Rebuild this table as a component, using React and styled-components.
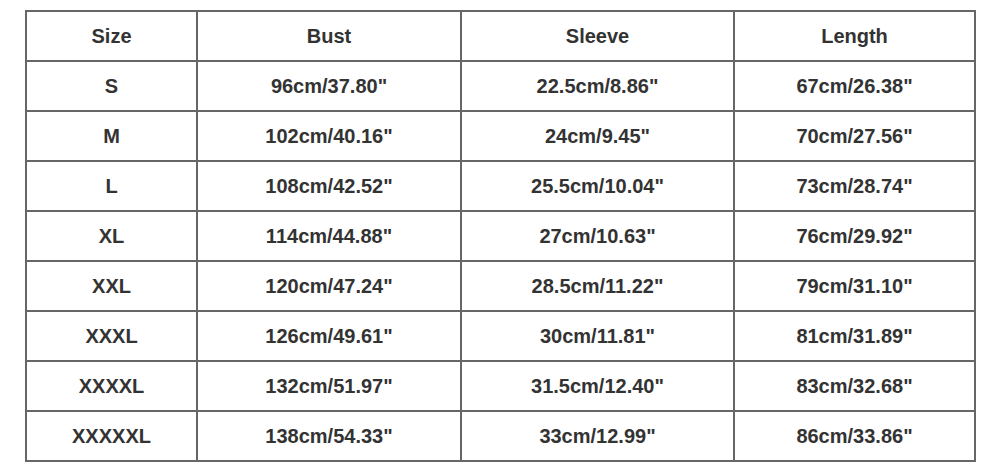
import React from "react";
import styled, { createGlobalStyle } from "styled-components";

const GlobalStyle = createGlobalStyle`
  html, body {
    margin: 0;
    padding: 0;
    background: #ffffff;
  }
`;

const columns = [
  { label: "Size", width: 171 },
  { label: "Bust", width: 264 },
  { label: "Sleeve", width: 273 },
  { label: "Length", width: 241 },
];

const rows = [
  ["S", "96cm/37.80\"", "22.5cm/8.86\"", "67cm/26.38\""],
  ["M", "102cm/40.16\"", "24cm/9.45\"", "70cm/27.56\""],
  ["L", "108cm/42.52\"", "25.5cm/10.04\"", "73cm/28.74\""],
  ["XL", "114cm/44.88\"", "27cm/10.63\"", "76cm/29.92\""],
  ["XXL", "120cm/47.24\"", "28.5cm/11.22\"", "79cm/31.10\""],
  ["XXXL", "126cm/49.61\"", "30cm/11.81\"", "81cm/31.89\""],
  ["XXXXL", "132cm/51.97\"", "31.5cm/12.40\"", "83cm/32.68\""],
  ["XXXXXL", "138cm/54.33\"", "33cm/12.99\"", "86cm/33.86\""],
];

const SizeChart = () => {
  return (
    <Page>
      <GlobalStyle />
      <Table>
        <colgroup>
          {columns.map((c) => (
            <col key={c.label} style={{ width: c.width }} />
          ))}
        </colgroup>
        <thead>
          <tr>
            {columns.map((c) => (
              <HeadCell key={c.label}>{c.label}</HeadCell>
            ))}
          </tr>
        </thead>
        <tbody>
          {rows.map((r) => (
            <tr key={r[0]}>
              {r.map((v, i) => (
                <Cell key={i}>{v}</Cell>
              ))}
            </tr>
          ))}
        </tbody>
      </Table>
    </Page>
  );
};

const Page = styled.div`
  width: 1000px;
  height: 472px;
  padding: 10px 0 0 25px;
  box-sizing: border-box;
  background: #ffffff;
`;

const Table = styled.table`
  border-collapse: collapse;
  table-layout: fixed;
  width: 950px;
  font-family: "Liberation Sans", Arial, sans-serif;
  font-weight: bold;
  font-size: 20px;
  color: #333333;
`;

const Cell = styled.td`
  border: 2px solid #666666;
  height: 50px;
  padding: 0;
  box-sizing: border-box;
  text-align: center;
  vertical-align: middle;
`;

const HeadCell = styled(Cell).attrs({ as: "th" })`
  font-weight: bold;
`;

export default SizeChart;
